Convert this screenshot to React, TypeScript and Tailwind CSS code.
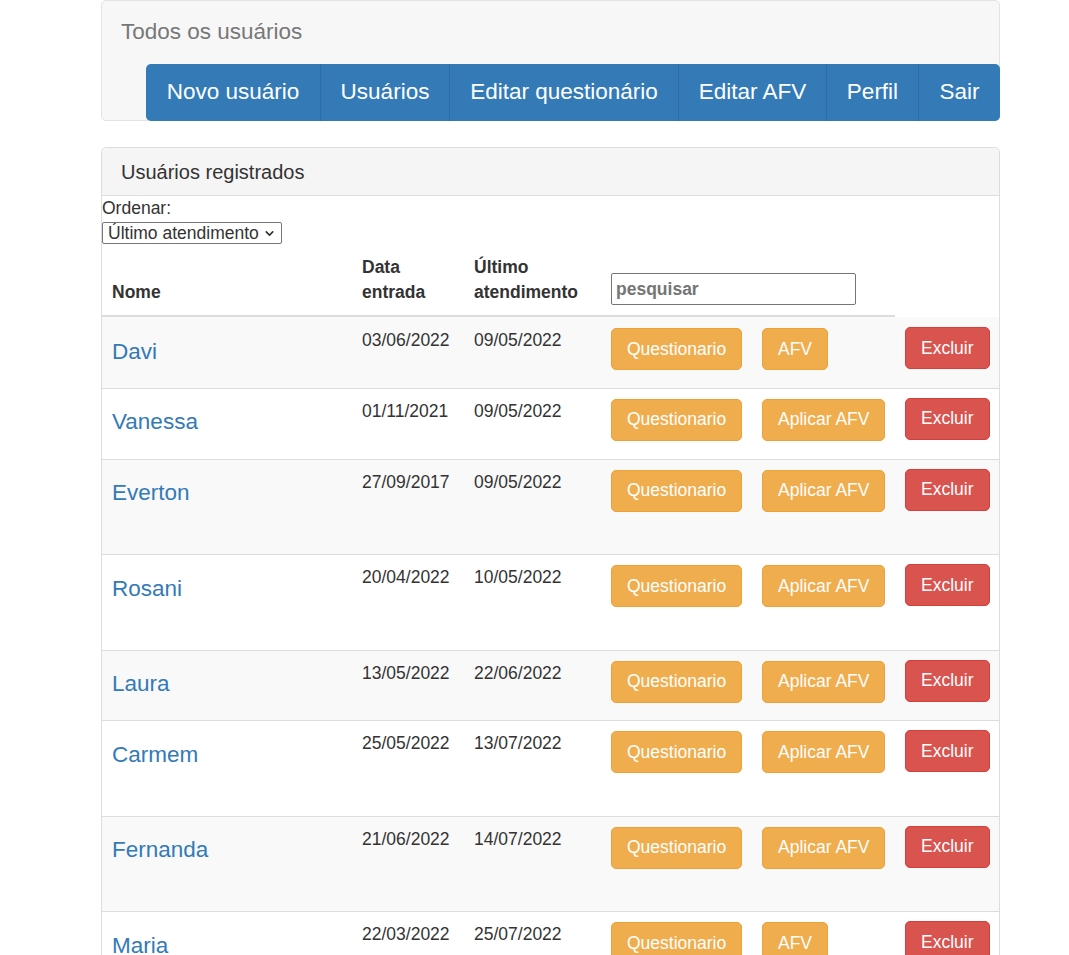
import { ChevronDown } from 'lucide-react';

const navItems = [
  { label: 'Novo usuário', width: 'w-[174px]' },
  { label: 'Usuários', width: 'w-[129px]' },
  { label: 'Editar questionário', width: 'w-[229px]' },
  { label: 'Editar AFV', width: 'w-[148px]' },
  { label: 'Perfil', width: 'w-[92px]' },
  { label: 'Sair', width: 'w-[82px]' },
];

const users = [
  { name: 'Davi', entrada: '03/06/2022', ultimo: '09/05/2022', afv: 'AFV', tall: false },
  { name: 'Vanessa', entrada: '01/11/2021', ultimo: '09/05/2022', afv: 'Aplicar AFV', tall: false },
  { name: 'Everton', entrada: '27/09/2017', ultimo: '09/05/2022', afv: 'Aplicar AFV', tall: true },
  { name: 'Rosani', entrada: '20/04/2022', ultimo: '10/05/2022', afv: 'Aplicar AFV', tall: true },
  { name: 'Laura', entrada: '13/05/2022', ultimo: '22/06/2022', afv: 'Aplicar AFV', tall: false },
  { name: 'Carmem', entrada: '25/05/2022', ultimo: '13/07/2022', afv: 'Aplicar AFV', tall: true },
  { name: 'Fernanda', entrada: '21/06/2022', ultimo: '14/07/2022', afv: 'Aplicar AFV', tall: true },
  { name: 'Maria', entrada: '22/03/2022', ultimo: '25/07/2022', afv: 'AFV', tall: false },
];

export default function App() {
  return (
    <div className="min-h-screen bg-white font-['Liberation_Sans',Arial,sans-serif] text-[17.5px] leading-[25px] text-[#333]">
      <div className="ml-[101px] w-[899px]">
        {/* Top panel */}
        <div className="rounded-[5px] border border-[#e3e3e3] bg-[#f7f7f7] pt-[19px]">
          <div className="pl-[19px] text-[22.5px] leading-[24px] text-[#777]">Todos os usuários</div>
          <div className="flex justify-end">
            <nav className="-mr-px -mb-px mt-[20px] flex h-[57px] rounded-[5px] bg-[#337ab7]">
              {navItems.map((item, index) => (
                <a
                  key={item.label}
                  className={`${item.width} flex items-center justify-center pb-[3px] text-[22.5px] text-white ${index > 0 ? 'border-l border-[#2e6da4]' : ''}`}
                >
                  {item.label}
                </a>
              ))}
            </nav>
          </div>
        </div>

        {/* Users panel */}
        <div className="mt-[26px] rounded-[5px] border border-[#ddd]">
          <div className="rounded-t-[5px] border-b border-[#ddd] bg-[#f5f5f5] px-[19px] py-[12.5px] text-[20px] leading-[22px]">
            Usuários registrados
          </div>

          <div>Ordenar:</div>
          <div className="relative mt-px h-[22px] w-[180px]">
            <select className="block h-[22px] w-[180px] appearance-none rounded-[2px] border border-[#767676] bg-white pl-[5px] text-[17.5px] leading-[20px] text-[#333]">
              <option>Último atendimento</option>
              <option>Nome</option>
              <option>Data entrada</option>
            </select>
            <ChevronDown className="pointer-events-none absolute right-[6px] top-[5px] h-[13px] w-[13px] text-[#333]" strokeWidth={3} />
          </div>

          {/* Table header */}
          <div className="mt-px flex font-bold">
            <div className="flex h-[72px] w-[250px] items-end border-b-2 border-[#ddd] px-[10px] pb-[10px]">Nome</div>
            <div className="flex h-[72px] w-[112px] items-end border-b-2 border-[#ddd] px-[10px] pb-[10px]">
              Data
              <br />
              entrada
            </div>
            <div className="flex h-[72px] w-[137px] items-end border-b-2 border-[#ddd] px-[10px] pb-[10px]">
              Último
              <br />
              atendimento
            </div>
            <div className="flex h-[72px] w-[294px] items-end border-b-2 border-[#ddd] px-[10px] pb-[10px]">
              <input
                placeholder="pesquisar"
                className="h-[32px] w-[245px] rounded-[2px] border border-[#767676] px-[4px] font-bold text-[#333] placeholder:text-[#757575]"
              />
            </div>
            <div className="w-[104px]" />
          </div>

          {/* Rows */}
          {users.map((user, index) => (
            <div
              key={user.name}
              className={`flex ${index % 2 === 0 ? 'bg-[#f9f9f9]' : 'bg-white'} ${index > 0 ? 'border-t border-[#ddd] pt-[10px]' : 'pt-[11px]'} pb-[10px]`}
            >
              <div className="w-[250px] px-[10px]">
                <a className="mb-[13.5px] mt-[11.5px] block text-[22.5px] leading-[24.75px] text-[#337ab7]">{user.name}</a>
                {user.tall && <div className="h-[24.75px]" />}
              </div>
              <div className="w-[112px] px-[10px]">{user.entrada}</div>
              <div className="w-[137px] px-[10px]">{user.ultimo}</div>
              <div className="w-[151px] px-[10px]">
                <button className="whitespace-nowrap rounded-[5px] border border-[#eea236] bg-[#f0ad4e] px-[15px] py-[7.5px] text-white">
                  Questionario
                </button>
              </div>
              <div className="w-[143px] px-[10px]">
                <button className="whitespace-nowrap rounded-[5px] border border-[#eea236] bg-[#f0ad4e] px-[15px] py-[7.5px] text-white">
                  {user.afv}
                </button>
              </div>
              <div className="w-[104px] px-[10px]">
                <button className="-mt-px whitespace-nowrap rounded-[5px] border border-[#d43f3a] bg-[#d9534f] px-[15px] py-[7.5px] text-white">
                  Excluir
                </button>
              </div>
            </div>
          ))}
        </div>
      </div>
    </div>
  );
}
